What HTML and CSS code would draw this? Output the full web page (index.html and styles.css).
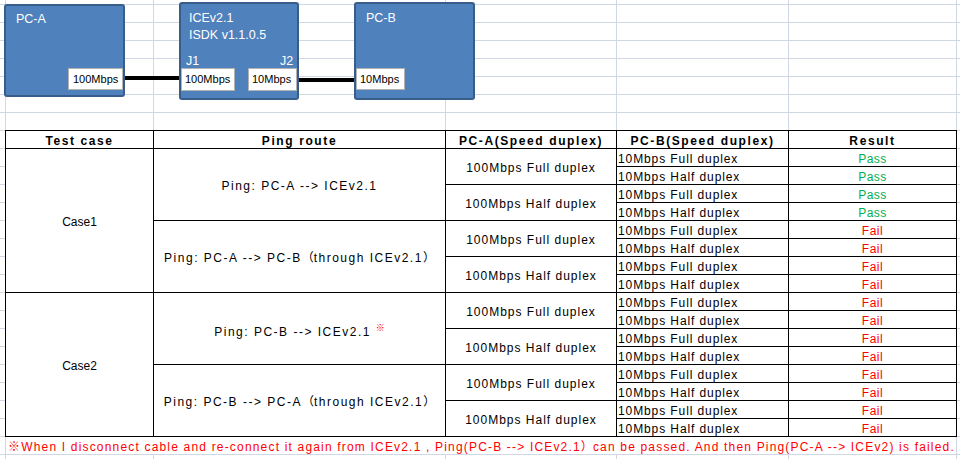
FILE: index.html
```html
<!DOCTYPE html>
<html lang="en">
<head>
<meta charset="utf-8">
<title>ICEv2.1 ping test</title>
<link rel="stylesheet" href="styles.css">
</head>
<body>
<div class="sheet">
  <div class="diagram">
    <div class="wire wire-a"></div>
    <div class="wire wire-b"></div>
    <div class="node node-pca">PC-A</div>
    <div class="node node-ice">
      <div>ICEv2.1</div>
      <div>ISDK v1.1.0.5</div>
      <span class="jack jack-1">J1</span>
      <span class="jack jack-2">J2</span>
    </div>
    <div class="node node-pcb">PC-B</div>
    <div class="port port-pca">100Mbps</div>
    <div class="port port-j1">100Mbps</div>
    <div class="port port-j2">10Mbps</div>
    <div class="port port-pcb">10Mbps</div>
  </div>

  <table class="results">
    <thead>
      <tr>
        <th class="col-case">Test case</th>
        <th class="col-route">Ping route</th>
        <th class="col-pca">PC-A(Speed duplex)</th>
        <th class="col-pcb">PC-B(Speed duplex)</th>
        <th class="col-result">Result</th>
      </tr>
    </thead>
    <tbody>
      <tr>
        <td rowspan="8" class="mid case">Case1</td>
        <td rowspan="4" class="mid route">Ping: PC-A --&gt; ICEv2.1</td>
        <td rowspan="2" class="mid">100Mbps Full duplex</td>
        <td class="left">10Mbps Full duplex</td>
        <td class="pass">Pass</td>
      </tr>
      <tr><td class="left">10Mbps Half duplex</td><td class="pass">Pass</td></tr>
      <tr>
        <td rowspan="2" class="mid">100Mbps Half duplex</td>
        <td class="left">10Mbps Full duplex</td><td class="pass">Pass</td>
      </tr>
      <tr><td class="left">10Mbps Half duplex</td><td class="pass">Pass</td></tr>
      <tr>
        <td rowspan="4" class="mid route">Ping: PC-A --&gt; PC-B<span class="fw">（</span>through ICEv2.1<span class="fw">）</span></td>
        <td rowspan="2" class="mid">100Mbps Full duplex</td>
        <td class="left">10Mbps Full duplex</td><td class="fail">Fail</td>
      </tr>
      <tr><td class="left">10Mbps Half duplex</td><td class="fail">Fail</td></tr>
      <tr>
        <td rowspan="2" class="mid">100Mbps Half duplex</td>
        <td class="left">10Mbps Full duplex</td><td class="fail">Fail</td>
      </tr>
      <tr><td class="left">10Mbps Half duplex</td><td class="fail">Fail</td></tr>
      <tr>
        <td rowspan="8" class="mid case">Case2</td>
        <td rowspan="4" class="mid route">Ping: PC-B --&gt; ICEv2.1 <span class="mark">※</span></td>
        <td rowspan="2" class="mid">100Mbps Full duplex</td>
        <td class="left">10Mbps Full duplex</td><td class="fail">Fail</td>
      </tr>
      <tr><td class="left">10Mbps Half duplex</td><td class="fail">Fail</td></tr>
      <tr>
        <td rowspan="2" class="mid">100Mbps Half duplex</td>
        <td class="left">10Mbps Full duplex</td><td class="fail">Fail</td>
      </tr>
      <tr><td class="left">10Mbps Half duplex</td><td class="fail">Fail</td></tr>
      <tr>
        <td rowspan="4" class="mid route">Ping: PC-B --&gt; PC-A<span class="fw">（</span>through ICEv2.1<span class="fw">）</span></td>
        <td rowspan="2" class="mid">100Mbps Full duplex</td>
        <td class="left">10Mbps Full duplex</td><td class="fail">Fail</td>
      </tr>
      <tr><td class="left">10Mbps Half duplex</td><td class="fail">Fail</td></tr>
      <tr>
        <td rowspan="2" class="mid">100Mbps Half duplex</td>
        <td class="left">10Mbps Full duplex</td><td class="fail">Fail</td>
      </tr>
      <tr><td class="left">10Mbps Half duplex</td><td class="fail">Fail</td></tr>
    </tbody>
  </table>

  <div class="note">※When I disconnect cable and re-connect it again from ICEv2.1 , Ping(PC-B --&gt; ICEv2.1<span class="fw">）</span>can be passed. And then Ping(PC-A --&gt; ICEv2) is failed.</div>
</div>
</body>
</html>
```

FILE: styles.css
```css
html, body {
  margin: 0;
  padding: 0;
  background: #ffffff;
}

.sheet {
  width: 960px;
  height: 459px;
  overflow: hidden;
  font-family: "Liberation Sans", "Noto Sans CJK JP", sans-serif;
  background:
    linear-gradient(#d0d7e5, #d0d7e5) 5px 0 / 1px 100% no-repeat,
    linear-gradient(#d0d7e5, #d0d7e5) 153px 0 / 1px 100% no-repeat,
    linear-gradient(#d0d7e5, #d0d7e5) 445px 0 / 1px 100% no-repeat,
    linear-gradient(#d0d7e5, #d0d7e5) 616px 0 / 1px 100% no-repeat,
    linear-gradient(#d0d7e5, #d0d7e5) 788px 0 / 1px 100% no-repeat,
    linear-gradient(#d0d7e5, #d0d7e5) 956px 0 / 1px 100% no-repeat,
    linear-gradient(#d0d7e5 1px, transparent 1px) 0 4px / 100% 18px,
    #ffffff;
}

/* ---------- diagram ---------- */
.diagram {
  position: relative;
  height: 130px;
}

.node {
  position: absolute;
  box-sizing: border-box;
  background: #4f81bd;
  border: 2px solid #385d8a;
  border-radius: 3px;
  color: #ffffff;
  font-size: 12.5px;
  line-height: 17px;
}

.node-pca {
  left: 4px;
  top: 4px;
  width: 121px;
  height: 93px;
  padding: 5px 0 0 10px;
}

.node-ice {
  left: 179px;
  top: 2px;
  width: 120px;
  height: 98px;
  padding: 6px 0 0 8px;
}

.node-pcb {
  left: 354px;
  top: 2px;
  width: 121px;
  height: 98px;
  padding: 6px 0 0 10px;
}

.jack {
  position: absolute;
  top: 49px;
  line-height: 17px;
}
.jack-1 { left: 5px; }
.jack-2 { left: 99px; }

.port {
  position: absolute;
  box-sizing: border-box;
  height: 22px;
  background: #ffffff;
  border: 1px solid #b2b2b2;
  color: #000000;
  font-size: 11px;
  line-height: 20px;
  padding-left: 4px;
}
.port-pca { left: 68px;  top: 68px; width: 55px; }
.port-j1  { left: 181px; top: 68px; width: 54px; height: 23px; padding-left: 3px; }
.port-j2  { left: 248px; top: 68px; width: 49px; height: 23px; padding-left: 3px; }
.port-pcb { left: 356px; top: 68px; width: 49px; padding-left: 3px; }

.wire {
  position: absolute;
  height: 4px;
  background: #000000;
}
.wire-a { left: 124px; top: 76px; width: 58px; }
.wire-b { left: 298px; top: 78px; width: 58px; }

/* ---------- table ---------- */
.results {
  margin-left: 5px;
  width: 952px;
  table-layout: fixed;
  border-collapse: separate;
  border-spacing: 0;
  border-left: 1px solid #000000;
  border-top: 1px solid #000000;
  background: #ffffff;
  font-size: 12px;
  color: #000000;
}

.results tr {
  height: 18px;
}

.results th,
.results td {
  box-sizing: border-box;
  border-right: 1px solid #000000;
  border-bottom: 1px solid #000000;
  padding: 3px 0 0 0;
  line-height: 14px;
  white-space: nowrap;
  overflow: visible;
  letter-spacing: 1px;
  text-align: center;
}

.results th {
  font-weight: bold;
  letter-spacing: 1.6px;
}

.col-case   { width: 148px; }
.col-route  { width: 292px; }
.col-pca    { width: 171px; }
.col-pcb    { width: 172px; }
.col-result { width: 168px; }

.results td.mid {
  vertical-align: middle;
}

.results td.case {
  letter-spacing: 0;
}

.results td.route {
  letter-spacing: 1.5px;
}

.results td.left {
  text-align: left;
  padding-left: 1px;
  letter-spacing: 0.9px;
}

.results td.pass {
  color: #00b050;
  letter-spacing: 0.5px;
}

.results td.fail {
  color: #ff0000;
  letter-spacing: 0.5px;
}

.fw {
  letter-spacing: 0;
}

.mark {
  color: #ff0000;
  font-size: 9px;
  vertical-align: 5px;
  letter-spacing: 0;
}

/* ---------- note row ---------- */
.note {
  margin-left: 6px;
  width: 950px;
  height: 17px;
  box-sizing: border-box;
  padding: 3px 0 0 2px;
  background: #ffffff;
  color: #ff0000;
  font-size: 12px;
  line-height: 14px;
  letter-spacing: 1.18px;
  white-space: nowrap;
}
```
